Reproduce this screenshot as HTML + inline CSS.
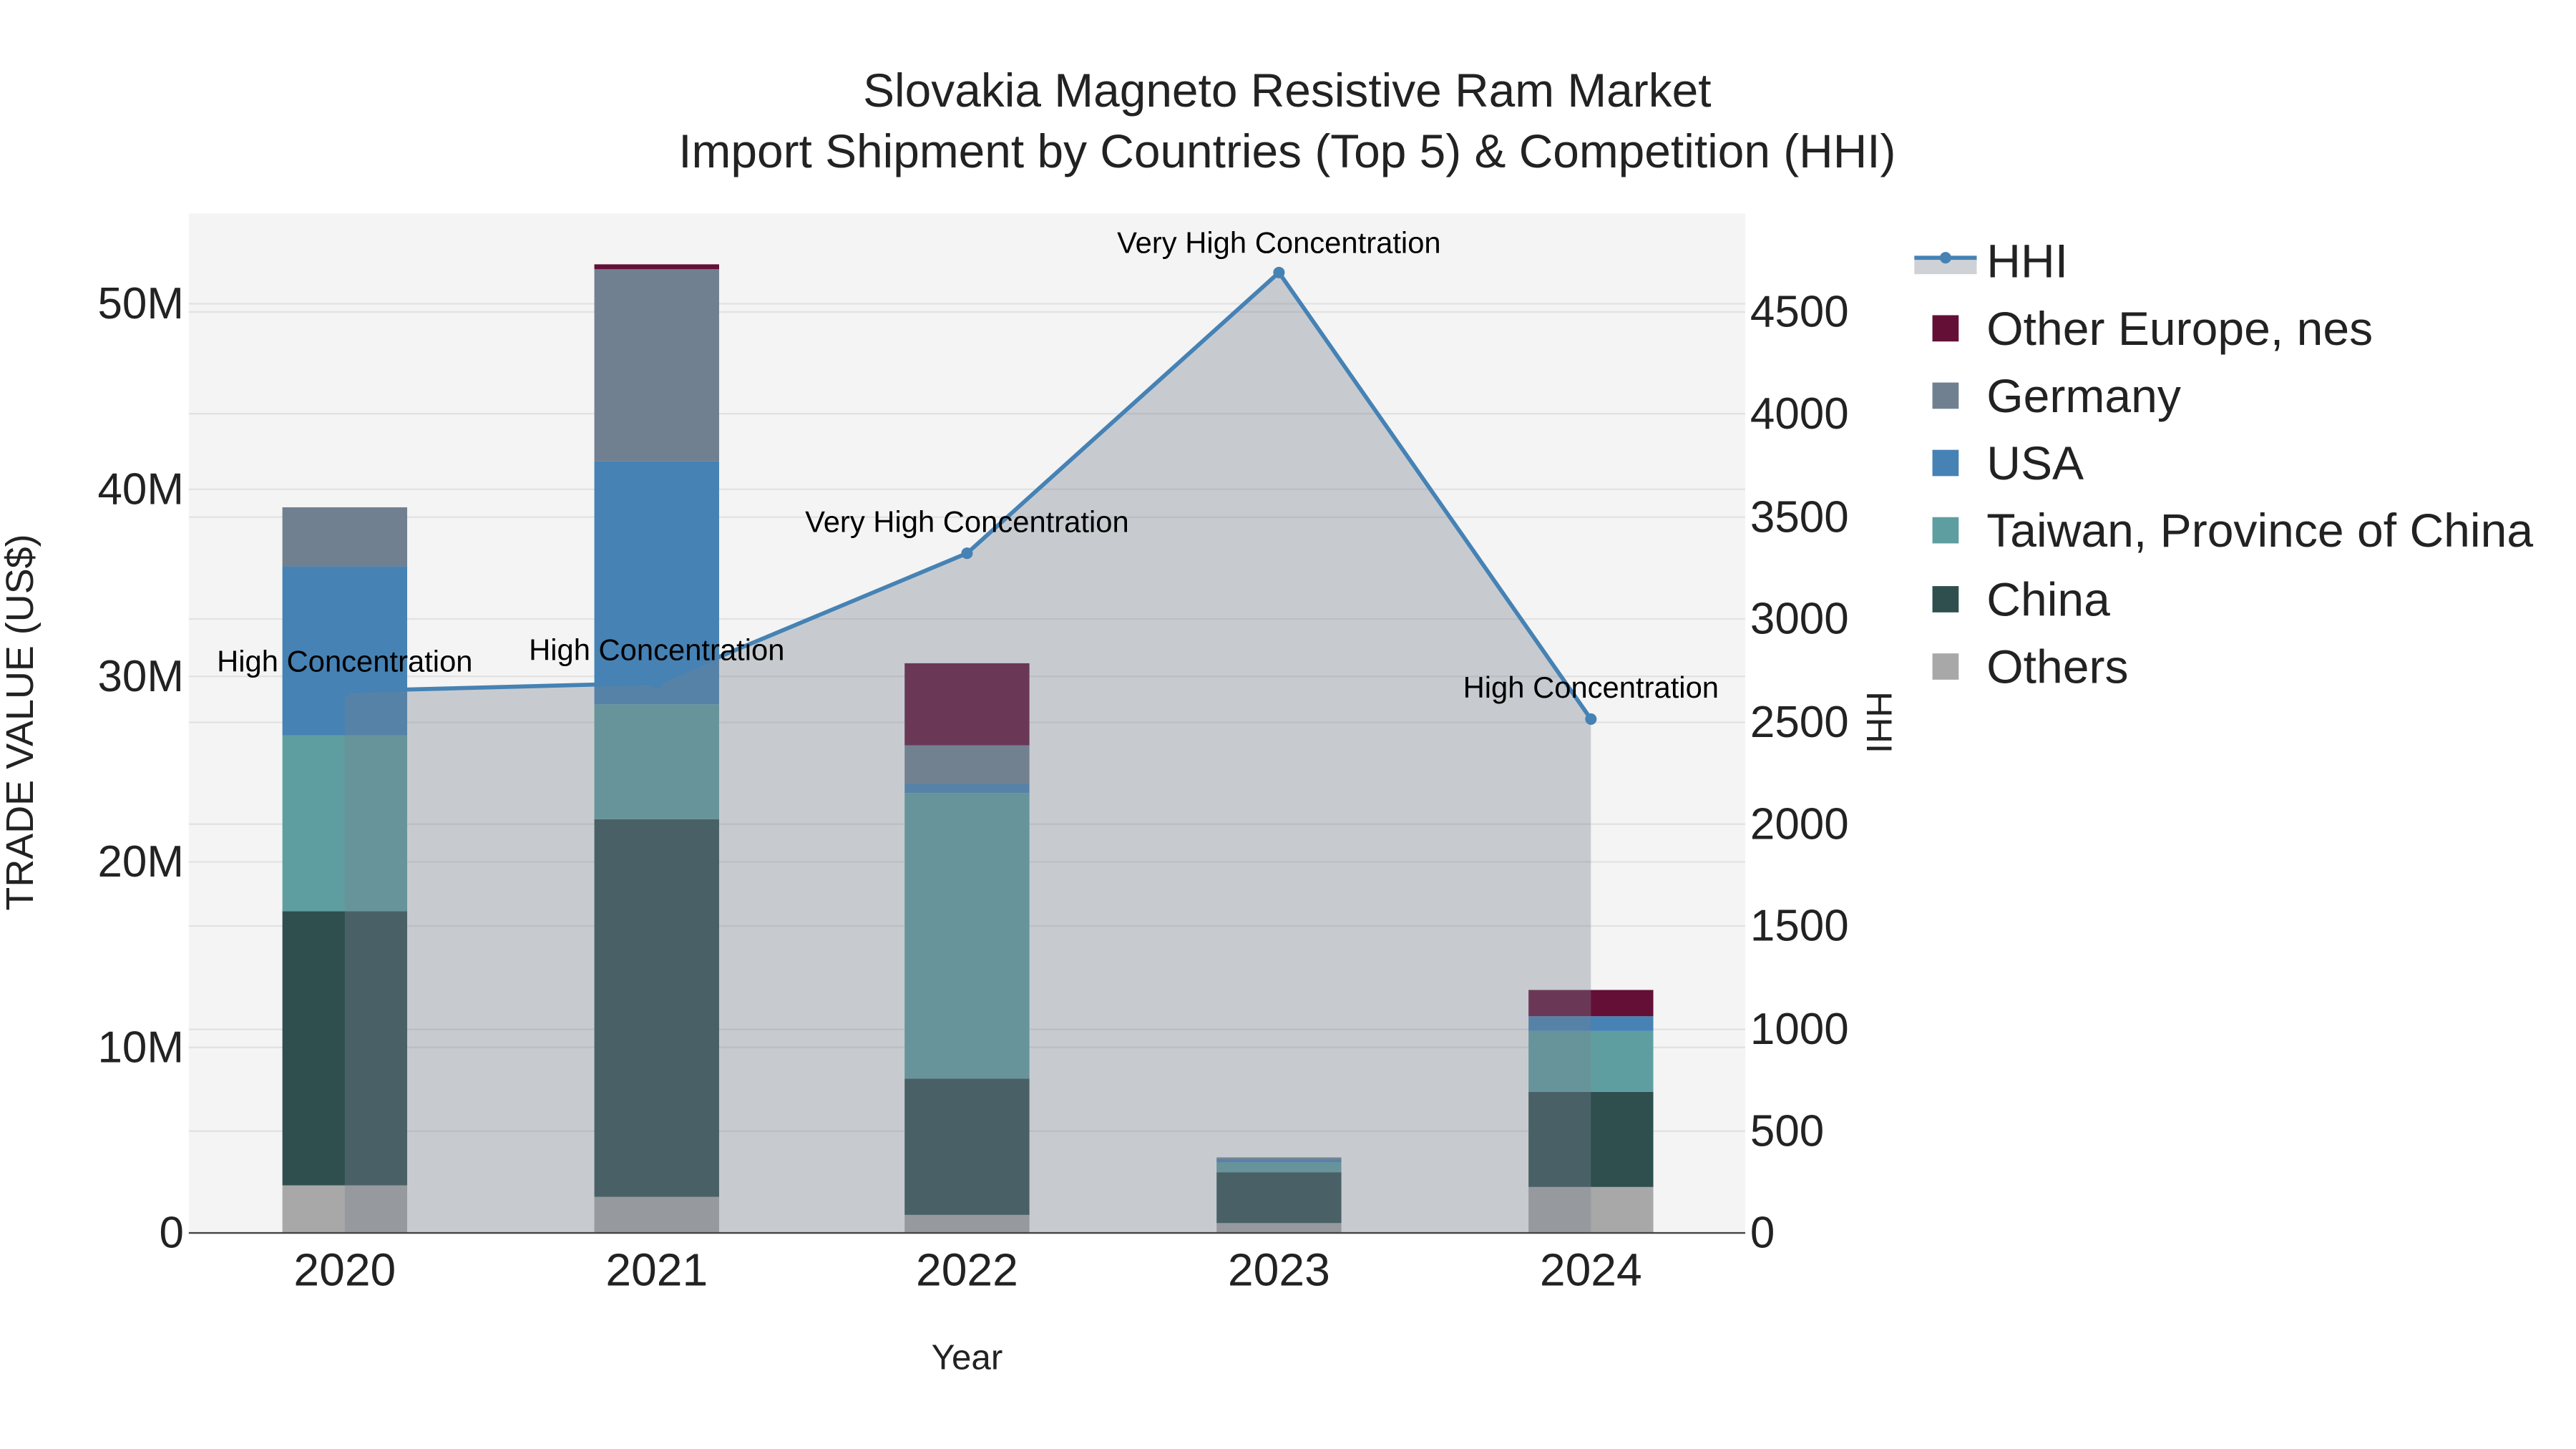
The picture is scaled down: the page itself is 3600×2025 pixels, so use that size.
<!DOCTYPE html>
<html><head><meta charset="utf-8"><style>html,body{margin:0;padding:0;background:#fff}svg{display:block}</style></head>
<body>
<svg width="3600" height="2025" viewBox="0 0 1569 882.6" preserveAspectRatio="none" xmlns="http://www.w3.org/2000/svg" font-family="Liberation Sans, sans-serif">
<rect width="1569" height="882.6" fill="#fff"/>
<rect x="115" y="130" width="948" height="621" fill="#f4f4f4"/>
<g stroke="#e2e2e2" stroke-width="1">
<line x1="115" x2="1063" y1="638" y2="638"/><line x1="115" x2="1063" y1="525" y2="525"/><line x1="115" x2="1063" y1="412" y2="412"/><line x1="115" x2="1063" y1="298" y2="298"/><line x1="115" x2="1063" y1="185" y2="185"/>
<line x1="115" x2="1063" y1="689" y2="689"/><line x1="115" x2="1063" y1="627" y2="627"/><line x1="115" x2="1063" y1="564" y2="564"/><line x1="115" x2="1063" y1="502" y2="502"/><line x1="115" x2="1063" y1="440" y2="440"/><line x1="115" x2="1063" y1="377" y2="377"/><line x1="115" x2="1063" y1="315" y2="315"/><line x1="115" x2="1063" y1="252" y2="252"/><line x1="115" x2="1063" y1="190" y2="190"/>
</g>
<g>
<rect x="172" y="722" width="76" height="29" fill="#a8a8a8"/><rect x="172" y="555" width="76" height="167" fill="#2f4f4f"/><rect x="172" y="448" width="76" height="107" fill="#5f9ea0"/><rect x="172" y="345" width="76" height="103" fill="#4682b4"/><rect x="172" y="309" width="76" height="36" fill="#708090"/>
<rect x="362" y="729" width="76" height="22" fill="#a8a8a8"/><rect x="362" y="499" width="76" height="230" fill="#2f4f4f"/><rect x="362" y="429" width="76" height="70" fill="#5f9ea0"/><rect x="362" y="281" width="76" height="148" fill="#4682b4"/><rect x="362" y="164" width="76" height="117" fill="#708090"/><rect x="362" y="161" width="76" height="3" fill="#630f36"/>
<rect x="551" y="740" width="76" height="11" fill="#a8a8a8"/><rect x="551" y="657" width="76" height="83" fill="#2f4f4f"/><rect x="551" y="483" width="76" height="174" fill="#5f9ea0"/><rect x="551" y="477" width="76" height="6" fill="#4682b4"/><rect x="551" y="454" width="76" height="23" fill="#708090"/><rect x="551" y="404" width="76" height="50" fill="#630f36"/>
<rect x="741" y="745" width="76" height="6" fill="#a8a8a8"/><rect x="741" y="714" width="76" height="31" fill="#2f4f4f"/><rect x="741" y="708" width="76" height="6" fill="#5f9ea0"/><rect x="741" y="706" width="76" height="2" fill="#4682b4"/><rect x="741" y="705" width="76" height="1" fill="#708090"/>
<rect x="931" y="723" width="76" height="28" fill="#a8a8a8"/><rect x="931" y="665" width="76" height="58" fill="#2f4f4f"/><rect x="931" y="628" width="76" height="37" fill="#5f9ea0"/><rect x="931" y="619" width="76" height="9" fill="#4682b4"/><rect x="931" y="603" width="76" height="16" fill="#630f36"/>
</g>
<polygon points="210,751 210,421 400,416 589,337 779,166 969,438 969,751" fill="rgba(120,130,145,0.36)"/>
<polyline points="210,421 400,416 589,337 779,166 969,438" fill="none" stroke="#4682b4" stroke-width="2.5"/>
<g fill="#4682b4"><circle cx="210" cy="421" r="3.5"/><circle cx="400" cy="416" r="3.5"/><circle cx="589" cy="337" r="3.5"/><circle cx="779" cy="166" r="3.5"/><circle cx="969" cy="438" r="3.5"/></g>
<line x1="115" x2="1063" y1="751" y2="751" stroke="#444" stroke-width="1"/>
<g font-size="18.2" fill="#000" text-anchor="middle">
<text x="210" y="409">High Concentration</text><text x="400" y="402">High Concentration</text><text x="589" y="324">Very High Concentration</text><text x="779" y="154">Very High Concentration</text><text x="969" y="425">High Concentration</text>
</g>
<g font-size="27" fill="#222" text-anchor="end">
<text x="112" y="760">0</text><text x="112" y="647">10M</text><text x="112" y="534">20M</text><text x="112" y="421">30M</text><text x="112" y="307">40M</text><text x="112" y="194">50M</text>
</g>
<g font-size="27" fill="#222">
<text x="1066" y="760">0</text><text x="1066" y="698">500</text><text x="1066" y="636">1000</text><text x="1066" y="573">1500</text><text x="1066" y="511">2000</text><text x="1066" y="449">2500</text><text x="1066" y="386">3000</text><text x="1066" y="324">3500</text><text x="1066" y="261">4000</text><text x="1066" y="199">4500</text>
</g>
<g font-size="28" fill="#222" text-anchor="middle">
<text x="210" y="783">2020</text><text x="400" y="783">2021</text><text x="589" y="783">2022</text><text x="779" y="783">2023</text><text x="969" y="783">2024</text>
</g>
<g font-size="28.7" fill="#222" text-anchor="middle">
<text x="784" y="65">Slovakia Magneto Resistive Ram Market</text>
<text x="784" y="102">Import Shipment by Countries (Top 5) &amp; Competition (HHI)</text>
</g>
<text x="589" y="834" font-size="21.5" text-anchor="middle" fill="#222">Year</text>
<text transform="translate(20,440) rotate(-90)" font-size="23.5" text-anchor="middle" fill="#222">TRADE VALUE (US$)</text>
<text transform="translate(1137,440) rotate(90)" font-size="22" text-anchor="middle" fill="#222">HHI</text>
<rect x="1166" y="156" width="38" height="11" fill="rgba(120,130,145,0.36)"/>
<line x1="1166" x2="1204" y1="157" y2="157" stroke="#4682b4" stroke-width="2.5"/><circle cx="1185" cy="157" r="3.5" fill="#4682b4"/>
<rect x="1177" y="192" width="16" height="16" fill="#630f36"/>
<rect x="1177" y="233" width="16" height="16" fill="#708090"/>
<rect x="1177" y="274" width="16" height="16" fill="#4682b4"/>
<rect x="1177" y="315" width="16" height="16" fill="#5f9ea0"/>
<rect x="1177" y="357" width="16" height="16" fill="#2f4f4f"/>
<rect x="1177" y="398" width="16" height="16" fill="#a8a8a8"/>
<g font-size="28.8" fill="#222">
<text x="1210" y="169">HHI</text><text x="1210" y="210">Other Europe, nes</text><text x="1210" y="251">Germany</text><text x="1210" y="292">USA</text><text x="1210" y="333">Taiwan, Province of China</text><text x="1210" y="375">China</text><text x="1210" y="416">Others</text>
</g>
</svg>
</body></html>
